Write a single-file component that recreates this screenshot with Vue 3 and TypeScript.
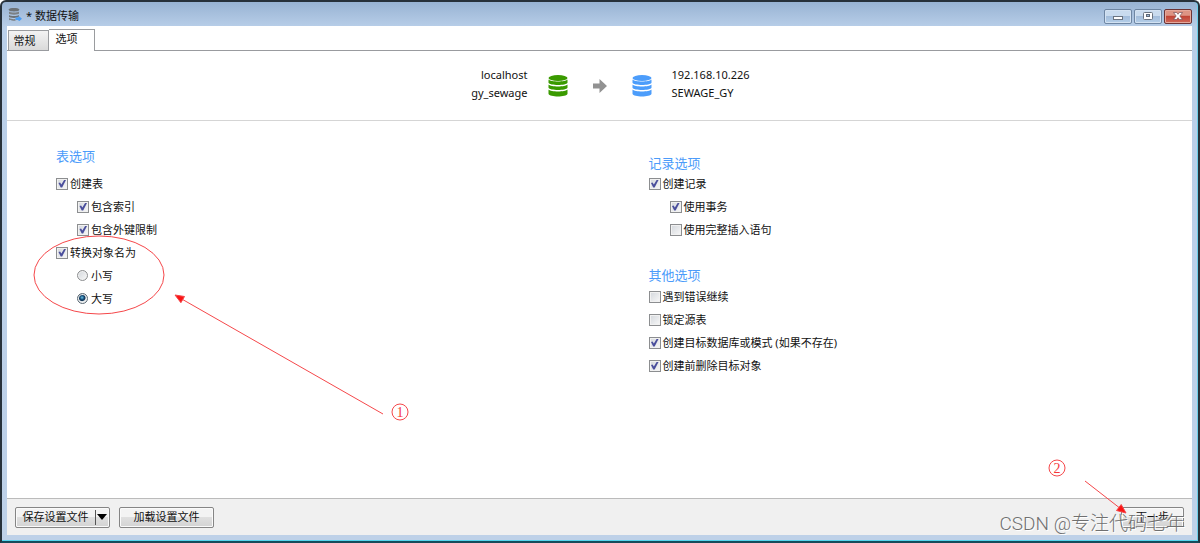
<script setup lang="ts">
import { reactive, ref } from 'vue'

interface Option {
  id: string
  label: string
  nested?: boolean
}

const checked = reactive<Record<string, boolean>>({
  createTables: true,
  indexes: true,
  foreignKeys: true,
  convertNames: true,
  createRecords: true,
  transaction: true,
  fullInsert: false,
  continueOnError: false,
  lockSource: false,
  createTarget: true,
  dropTarget: true,
})
const nameCase = ref('upper')
const activeTab = ref('options')

const tableOptions: Option[] = [
  { id: 'createTables', label: '创建表' },
  { id: 'indexes', label: '包含索引', nested: true },
  { id: 'foreignKeys', label: '包含外键限制', nested: true },
  { id: 'convertNames', label: '转换对象名为' },
]
const cases = [
  { id: 'lower', label: '小写' },
  { id: 'upper', label: '大写' },
]
const recordOptions: Option[] = [
  { id: 'createRecords', label: '创建记录' },
  { id: 'transaction', label: '使用事务', nested: true },
  { id: 'fullInsert', label: '使用完整插入语句', nested: true },
]
const otherOptions: Option[] = [
  { id: 'continueOnError', label: '遇到错误继续' },
  { id: 'lockSource', label: '锁定源表' },
  { id: 'createTarget', label: '创建目标数据库或模式 (如果不存在)' },
  { id: 'dropTarget', label: '创建前删除目标对象' },
]
</script>

<template>
  <div class="window">
    <header class="titlebar">
      <svg class="app-icon" viewBox="0 0 14 14" aria-hidden="true">
        <path d="M1 2.2C1 .6 11 .6 11 2.2v1C11 4.8 1 4.8 1 3.2z" fill="#6d7276" />
        <path d="M1 4.6c1.5 1.3 8.500 1.300 10 0v2c0 1.500-10 1.500-10 0z" fill="#7b8084" />
        <path d="M1 8c1.500 1.300 8.500 1.300 10 0v1.800c0 1.500-10 1.500-10 0z" fill="#6d7276" />
        <path d="M1 11.100c1.300 1 5 1.200 6.500.9v1.700C4.500 14 1 13.600 1 12.600z" fill="#7b8084" />
        <path d="M7.500 10.600h3V8.800l3.500 3-3.500 3V13h-3z" fill="#4a9cf2" />
      </svg>
      <span class="title">* 数据传输</span>
      <div class="caption">
        <button class="cap" type="button" aria-label="最小化">
          <svg viewBox="0 0 26 13"><rect x="8.500" y="6.500" width="9" height="3" fill="#fff" stroke="#6b7480" /></svg>
        </button>
        <button class="cap" type="button" aria-label="最大化">
          <svg viewBox="0 0 26 13">
            <rect x="8.500" y="2.500" width="9" height="7" rx="1" fill="#fff" stroke="#6b7480" />
            <rect x="11.500" y="4.500" width="3" height="2" fill="#9fbad7" stroke="#5f6977" />
          </svg>
        </button>
        <button class="cap close" type="button" aria-label="关闭">
          <svg viewBox="0 0 26 13">
            <path d="M8.500 2.500h3.200L13 4.300l1.300-1.800h3.200L14.800 6l2.700 3.500h-3.200L13 7.700l-1.300 1.800H8.500L11.200 6z" fill="#fff" stroke="#775057" stroke-width=".7" />
          </svg>
        </button>
      </div>
    </header>

    <div class="client">
      <nav class="tabs" role="tablist">
        <button class="tab" :class="{ active: activeTab === 'general' }" type="button" role="tab" @click="activeTab = 'general'">常规</button>
        <button class="tab" :class="{ active: activeTab === 'options' }" type="button" role="tab" @click="activeTab = 'options'">选项</button>
      </nav>

      <section class="route">
        <p class="endpoint source">localhost<br />gy_sewage</p>
        <svg class="db green" viewBox="0 0 20 22" aria-hidden="true">
          <ellipse cx="10" cy="3" rx="9.500" ry="3" />
          <path d="M.5 4.500c2 2.600 17 2.600 19 0v3.300c-1 3-18 3-19 0z" />
          <path d="M.5 9.500c2 2.600 17 2.600 19 0v3.300c-1 3-18 3-19 0z" />
          <path d="M.5 14.500c2 2.600 17 2.600 19 0v4.300c-1 3.600-18 3.600-19 0z" />
        </svg>
        <svg class="arrow" viewBox="0 0 14 14" aria-hidden="true"><path d="M0 4.500h6.500V0L14 7l-7.500 7V9.500H0z" fill="#929292" /></svg>
        <svg class="db blue" viewBox="0 0 20 22" aria-hidden="true">
          <ellipse cx="10" cy="3" rx="9.500" ry="3" />
          <path d="M.5 4.500c2 2.600 17 2.600 19 0v3.300c-1 3-18 3-19 0z" />
          <path d="M.5 9.500c2 2.600 17 2.600 19 0v3.300c-1 3-18 3-19 0z" />
          <path d="M.5 14.500c2 2.600 17 2.600 19 0v4.300c-1 3.600-18 3.600-19 0z" />
        </svg>
        <p class="endpoint">192.168.10.226<br />SEWAGE_GY</p>
      </section>

      <main class="options">
        <section class="column">
          <h2>表选项</h2>
          <label v-for="o in tableOptions" :key="o.id" class="row" :class="{ nested: o.nested }">
            <input v-model="checked[o.id]" type="checkbox" />{{ o.label }}
          </label>
          <label v-for="c in cases" :key="c.id" class="row nested">
            <input v-model="nameCase" type="radio" name="case" :value="c.id" />{{ c.label }}
          </label>
        </section>
        <section class="column second">
          <h2>记录选项</h2>
          <label v-for="o in recordOptions" :key="o.id" class="row" :class="{ nested: o.nested }">
            <input v-model="checked[o.id]" type="checkbox" />{{ o.label }}
          </label>
          <h2 class="next">其他选项</h2>
          <label v-for="o in otherOptions" :key="o.id" class="row">
            <input v-model="checked[o.id]" type="checkbox" />{{ o.label }}
          </label>
        </section>
      </main>

      <footer class="actions">
        <div class="split">
          <button class="split-main" type="button">保存设置文件</button>
          <button class="split-menu" type="button" aria-label="更多"><svg viewBox="0 0 10 6"><path d="M0 0h10L5 6z" /></svg></button>
        </div>
        <button class="btn" type="button">加载设置文件</button>
        <button class="btn forward" type="button">下一步</button>
      </footer>
    </div>

    <svg class="mark first" viewBox="0 0 400 190" aria-hidden="true">
      <ellipse cx="69" cy="44" rx="65" ry="39" />
      <path d="M353 183 150 67" />
      <path class="tip" d="M145 64l9.500 1.500-3.600 6.200z" />
      <circle cx="370" cy="181" r="8" />
      <text x="370" y="186">1</text>
    </svg>
    <svg class="mark last" viewBox="0 0 90 70" aria-hidden="true">
      <path d="M45 29 81 57" />
      <path class="tip" d="M86 61l-9.500-2.500 4.700-6z" />
      <circle cx="17" cy="16" r="8" />
      <text x="17" y="21">2</text>
    </svg>
    <span class="watermark">CSDN @专注代码七年</span>
  </div>
</template>

<style>
body {
  margin: 0;
}
</style>

<style scoped>
.window {
  position: relative;
  box-sizing: border-box;
  min-height: 100vh;
  display: flex;
  flex-direction: column;
  padding: 0 6px 6px 5px;
  border: 2px solid #27313a;
  border-bottom-color: #164b5b;
  border-radius: 6px 6px 0 0;
  background: linear-gradient(#98b3d3, #b9cfe9 26px, #bed1e8);
  box-shadow: inset 0 -1px #54d5ee, inset -1px 0 #6ccfea;
  color: #111;
  font: 11px/18px "Noto Sans", "Noto Sans CJK SC", sans-serif;
  overflow: hidden;
}
button {
  font: inherit;
  color: inherit;
  padding: 0;
  margin: 0;
}
.titlebar {
  display: flex;
  align-items: center;
  height: 24px;
  padding-left: 1px;
}
.app-icon {
  width: 14px;
  height: 14px;
}
.title {
  margin: 4px 0 0 4px;
}
.caption {
  display: flex;
  gap: 2px;
  margin: 4px 0 0 auto;
}
.cap {
  box-sizing: border-box;
  width: 28px;
  height: 15px;
  border: 1px solid #6e86a3;
  border-radius: 2px;
  background: linear-gradient(#c9dbee 45%, #a3bddb 50%, #b5cfe9);
  box-shadow: inset 0 0 0 1px #d3e2f2;
}
.cap svg {
  display: block;
  width: 26px;
  height: 13px;
}
.close {
  border-color: #6c3335;
  background: linear-gradient(#dd9484 40%, #c14536 50%, #d0695a);
  box-shadow: inset 0 0 0 1px #e5a99c;
}
.client {
  flex: 1;
  display: flex;
  flex-direction: column;
  background: #fff;
}
.tabs {
  display: flex;
  align-items: flex-end;
  height: 24px;
  padding: 0 1px;
  border-bottom: 1px solid #999b9f;
}
.tab {
  box-sizing: border-box;
  width: 41px;
  height: 20px;
  padding-right: 8px;
  border: 1px solid #9a9c9f;
  border-bottom: 0;
  background: linear-gradient(#f3f3f3, #dadada);
}
.tab.active {
  width: 46px;
  height: 22px;
  margin: 0 0 -1px;
  padding: 0 10px 3px 0;
  border-left: 0;
  background: #fff;
}
.route {
  display: grid;
  grid-template-columns: 1fr 20px 64px 20px 1fr;
  align-items: center;
  height: 69px;
  border-bottom: 1px solid #d5d5d5;
}
.endpoint {
  margin: 0 20px;
  padding-bottom: 3px;
}
.source {
  text-align: right;
}
.arrow {
  width: 14px;
  height: 14px;
  justify-self: center;
}
.db {
  width: 20px;
  height: 22px;
}
.green {
  fill: #3a9a00;
}
.blue {
  fill: #4c9dfb;
}
.options {
  flex: 1;
  display: grid;
  grid-template-columns: 1fr 1fr;
}
.column {
  padding: 25px 0 0 49px;
}
.second {
  padding-top: 32px;
}
h2 {
  margin: 0 0 6px;
  color: #4b9bfa;
  font-size: 13px;
  line-height: 20px;
  font-weight: 400;
}
.second h2 {
  margin-bottom: 0;
  height: 19px;
}
.second .next {
  margin: 24px 0 0;
  height: 20px;
}
.row {
  display: flex;
  align-items: center;
  width: fit-content;
  height: 23px;
}
.nested {
  margin-left: 21px;
}
input {
  appearance: none;
  box-sizing: border-box;
  width: 12px;
  height: 12px;
  margin: 0 2px 0 0;
  border: 1px solid #8c8e90;
  background: linear-gradient(135deg, #d3d7dc, #f8f8f8);
  box-shadow: inset 0 0 0 1px #f1f1f1;
}
input[type='checkbox']:checked::before {
  content: '';
  display: block;
  width: 8px;
  height: 8px;
  margin: 1px;
  background: #4a4e9c;
  clip-path: polygon(6% 44%, 26% 38%, 42% 64%, 80% 0, 100% 6%, 52% 100%, 34% 100%);
}
input[type='radio'] {
  width: 11px;
  height: 11px;
  margin-right: 3px;
  border-radius: 50%;
}
input[type='radio']:checked {
  border-color: #596873;
  background: radial-gradient(circle at 45% 40%, #6cc5e8 0, #174f7c 2px, #123454 3px, #e9eef1 4px);
}
.actions {
  display: flex;
  align-items: center;
  gap: 9px;
  height: 36px;
  padding: 0 8px;
  border-top: 1px solid #bbb;
  background: #f0f0f0;
}
.btn,
.split {
  box-sizing: border-box;
  width: 95px;
  height: 21px;
  border: 1px solid #858585;
  border-radius: 2px;
  background: linear-gradient(#f3f3f3 45%, #dfdfdf 50%, #d3d3d3);
  box-shadow: inset 0 0 0 1px #fafafa;
}
.split {
  display: flex;
}
.split button {
  border: 0;
  background: none;
}
.split-main {
  flex: 1;
}
.split .split-menu {
  width: 14px;
  margin: 2px 0;
  border-left: 1px solid #555;
}
.split-menu svg {
  display: block;
  width: 10px;
  height: 6px;
  margin: 0 1px;
}
.forward {
  width: 63px;
  margin-left: auto;
}
.mark {
  position: absolute;
  pointer-events: none;
  fill: none;
  stroke: #f5474a;
  stroke-width: 1;
}
.mark .tip {
  fill: #fa1414;
}
.mark text {
  fill: #f5373a;
  stroke: none;
  font: 14px "Liberation Serif", serif;
  text-anchor: middle;
}
.first {
  left: 28px;
  top: 229px;
  width: 400px;
  height: 190px;
}
.last {
  right: 68px;
  bottom: 19px;
  width: 90px;
  height: 70px;
}
.watermark {
  position: absolute;
  right: 13px;
  bottom: 4px;
  color: #707070;
  font: 300 19px/26px Roboto, "Noto Sans CJK SC", sans-serif;
  text-shadow: 1px 1px #fff;
  pointer-events: none;
}
</style>
